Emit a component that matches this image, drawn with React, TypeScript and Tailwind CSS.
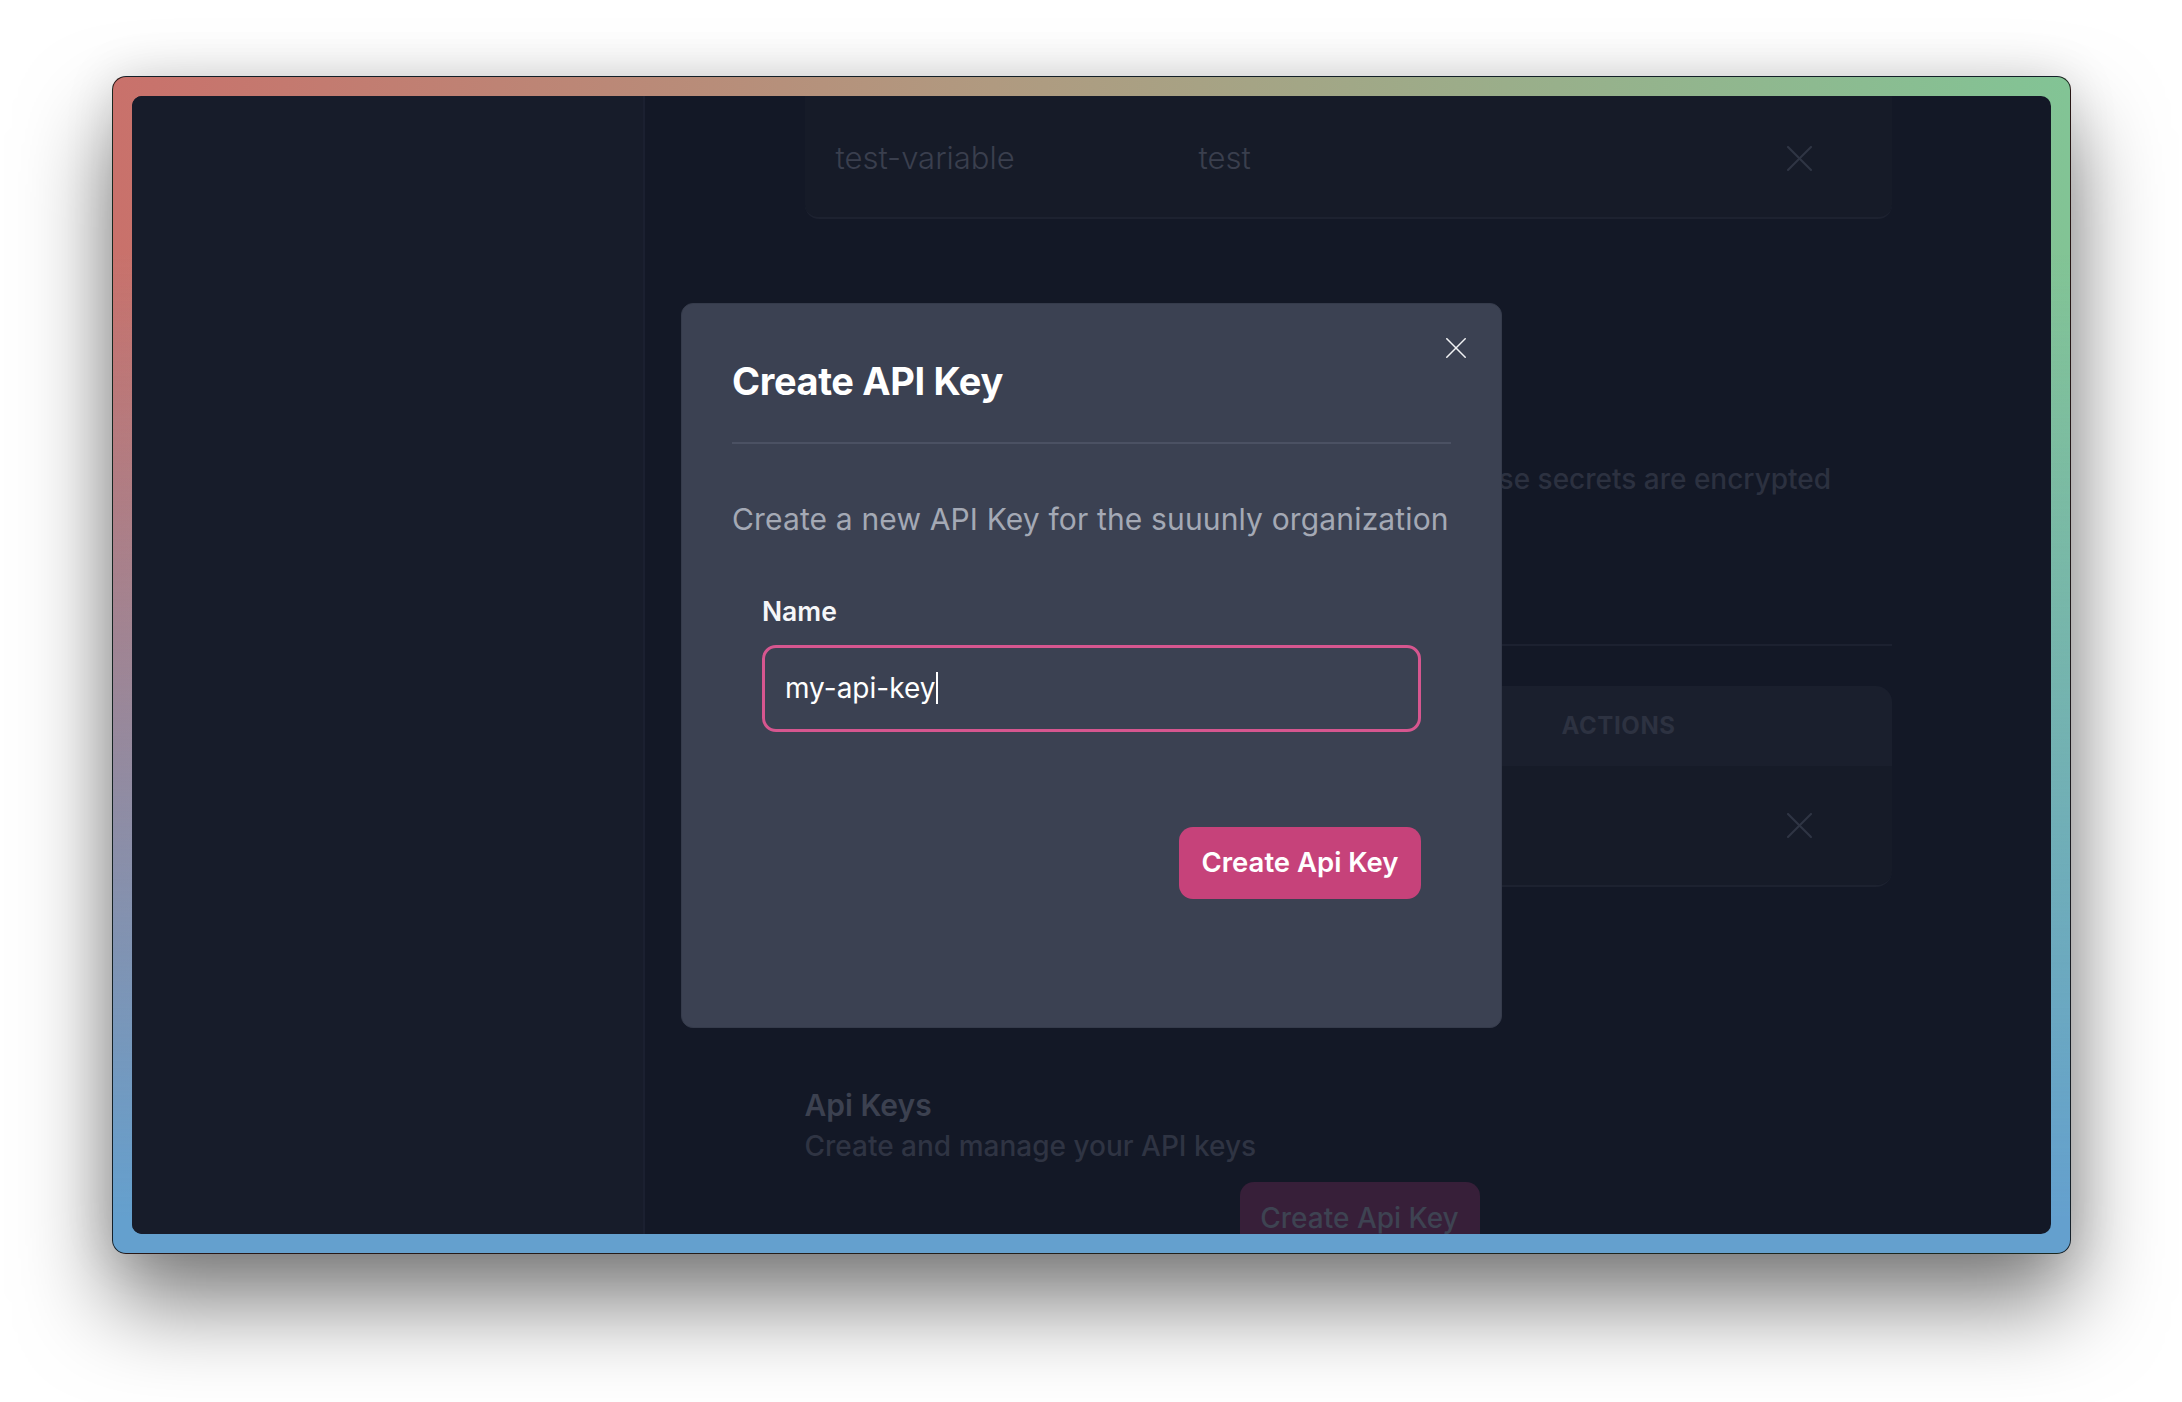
import React from "react";

function XIcon({ size, color, stroke }: { size: number; color: string; stroke: number }) {
  return (
    <svg width={size} height={size} viewBox="0 0 24 24" fill="none">
      <line x1="1" y1="1" x2="23" y2="23" stroke={color} strokeWidth={stroke} strokeLinecap="square" />
      <line x1="23" y1="1" x2="1" y2="23" stroke={color} strokeWidth={stroke} strokeLinecap="square" />
    </svg>
  );
}

export default function App() {
  return (
    <div className="w-[2182px] h-[1402px] bg-white overflow-hidden font-['Inter',sans-serif]">
      <div className="pl-[112px] pt-[76px]">
        <div className="w-[1959px] h-[1178px] rounded-[14px] p-[19px] border border-black/80 shadow-[0_0_50px_rgba(0,0,0,0.12),0_50px_90px_rgba(0,0,0,0.5)] bg-[linear-gradient(180deg,rgba(100,160,206,0)_15%,rgba(100,160,206,1)_97%),linear-gradient(90deg,#c9716b_0%,#b09a80_45%,#82c495_100%)]">
          <div className="relative w-full h-full rounded-[10px] overflow-hidden flex bg-[#131826]">
            <aside className="w-[513px] shrink-0 bg-[#171c2a] border-r-2 border-[#1b2030]" />
            <main className="flex-1 flex justify-center overflow-hidden">
              <div className="w-[1087px] flex flex-col">
                {/* top card (scrolled) */}
                <div className="h-[123px] shrink-0 rounded-b-[14px] bg-[#161b28] border-b-2 border-[#1d2230] flex items-center pl-[31px] pr-[80px] pt-[4px] text-[31px] font-light text-[#3a3f4e]">
                  <div className="w-[363px]">test-variable</div>
                  <div className="flex-1">test</div>
                  <XIcon size={25} color="#2f3544" stroke={2} />
                </div>

                {/* secrets section */}
                <div className="mt-[199px] shrink-0 text-[30px] leading-[40px] font-semibold text-[#3c4150]">Secrets</div>
                <div className="mt-[1px] shrink-0 text-[28px] leading-[40px] font-medium text-[#2c3140] whitespace-nowrap">
                  Add workflow secrets to use in your workflows. These secrets are encrypted
                </div>
                <div className="mt-[145px] shrink-0 h-[2px] bg-[#1c2130]" />

                {/* table */}
                <div className="mt-[40px] shrink-0 rounded-[16px] overflow-hidden border-b-2 border-[#1d2230]">
                  <div className="h-[80px] bg-[#1a1f2d] flex items-center pl-[31px] text-[24px] font-bold tracking-wide text-[#2d3241]">
                    <div className="w-[363px]">NAME</div>
                    <div className="w-[363px]">VALUE</div>
                    <div>ACTIONS</div>
                  </div>
                  <div className="h-[119px] bg-[#161b28] flex items-center pl-[31px] pr-[80px] text-[31px] font-light text-[#3a3f4e]">
                    <div className="w-[363px]">test-secret</div>
                    <div className="flex-1">••••••</div>
                    <XIcon size={25} color="#2f3544" stroke={2} />
                  </div>
                </div>

                {/* api keys section */}
                <div className="mt-[198px] shrink-0 w-[675px] flex flex-col">
                  <div className="text-[30px] leading-[40px] font-semibold text-[#3c4150]">Api Keys</div>
                  <div className="mt-[1px] text-[28px] leading-[40px] font-medium text-[#2f3443]">Create and manage your API keys</div>
                  <div className="mt-[16px] self-end w-[240px] h-[72px] shrink-0 rounded-[14px] bg-[#371f39] flex items-center justify-center text-[28px] font-medium text-[#3e4352]">
                    Create Api Key
                  </div>
                </div>
              </div>
            </main>

            {/* overlay + modal */}
            <div className="absolute inset-0 flex items-center justify-center">
              <div className="relative w-[821px] h-[725px] rounded-[12px] bg-[#3b4152] border border-[#353b4b] px-[50px] flex flex-col">
                <button className="absolute left-[763px] top-[34px] w-[21px] h-[21px] flex items-center justify-center">
                  <XIcon size={20} color="#f1f2f4" stroke={1.8} />
                </button>
                <div className="pt-[51px] text-[38px] leading-[52px] font-bold text-white tracking-[-0.01em]">Create API Key</div>
                <div className="mt-[35px] h-[2px] bg-[#4b5163]" />
                <div className="mt-[55px] text-[30px] leading-[40px] text-[#a4a9b5] whitespace-nowrap tracking-[0.005em]">
                  Create a new API Key for the suuunly organization
                </div>
                <div className="px-[30px] flex flex-col">
                  <div className="mt-[54px] text-[26.5px] leading-[36px] font-semibold text-[#f5f6f8]">Name</div>
                  <div className="mt-[16px] h-[87px] rounded-[14px] border-[3px] border-[#d6568f] flex items-center pl-[20px] text-[28px] text-white">
                    <span>my-api-key</span>
                    <span className="ml-[1px] w-[2px] h-[32px] bg-white" />
                  </div>
                  <div className="mt-[95px] flex justify-end">
                    <div className="w-[242px] h-[72px] rounded-[14px] bg-[#c6427a] flex items-center justify-center text-[27.5px] font-semibold text-white">
                      Create Api Key
                    </div>
                  </div>
                </div>
              </div>
            </div>
          </div>
        </div>
      </div>
    </div>
  );
}
